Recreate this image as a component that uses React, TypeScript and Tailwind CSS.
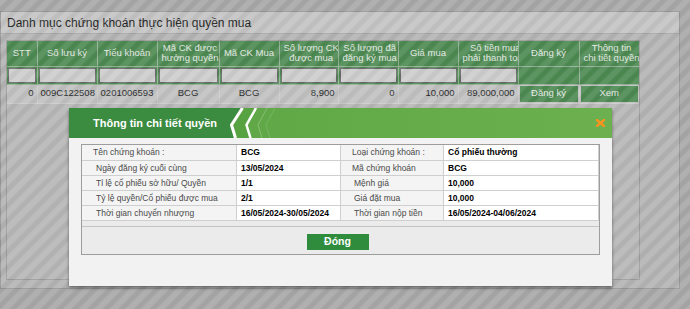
import React from "react";

const cols = [30, 60, 60, 62, 60, 59, 60, 60, 60, 61, 60];

const headers: string[][] = [
  ["STT"],
  ["Số lưu ký"],
  ["Tiểu khoản"],
  ["Mã CK được", "hưởng quyền"],
  ["Mã CK Mua"],
  ["Số lượng CK", "được mua"],
  ["Số lượng đã", "đăng ký mua"],
  ["Giá mua"],
  ["Số tiền mua", "phải thanh toán"],
  ["Đăng ký"],
  ["Thông tin", "chi tiết quyền"],
];

const rowData: { text: string; align: "left" | "center" | "right" }[] = [
  { text: "0", align: "right" },
  { text: "009C122508", align: "center" },
  { text: "0201006593", align: "center" },
  { text: "BCG", align: "center" },
  { text: "BCG", align: "center" },
  { text: "8,900", align: "right" },
  { text: "0", align: "right" },
  { text: "10,000", align: "right" },
  { text: "89,000,000", align: "right" },
];

const details = [
  { l1: "Tên chứng khoán :", v1: "BCG", l2: "Loại chứng khoán :", v2: "Cổ phiếu thường", p1: "pl-[11px]", p2: "pl-[11px]" },
  { l1: "Ngày đăng ký cuối cùng", v1: "13/05/2024", l2: "Mã chứng khoán", v2: "BCG", p1: "pl-[14px]", p2: "pl-[11px]" },
  { l1: "Tỉ lệ cổ phiếu sở hữu/ Quyền", v1: "1/1", l2: "Mệnh giá", v2: "10,000", p1: "pl-[14px]", p2: "pl-[13px]" },
  { l1: "Tỷ lệ quyền/Cổ phiếu được mua", v1: "2/1", l2: "Giá đặt mua", v2: "10,000", p1: "pl-[14px]", p2: "pl-[13px]" },
  { l1: "Thời gian chuyển nhượng", v1: "16/05/2024-30/05/2024", l2: "Thời gian nộp tiền", v2: "16/05/2024-04/06/2024", p1: "pl-[14px]", p2: "pl-[13px]" },
];

const HeaderArt = () => (
  <svg className="absolute inset-0 h-full w-full" viewBox="0 0 543 30" preserveAspectRatio="none">
    <defs>
      <linearGradient id="hdr" x1="0" x2="1" y1="0" y2="0">
        <stop offset="0" stopColor="#5aa443" />
        <stop offset="1" stopColor="#6cb04f" />
      </linearGradient>
    </defs>
    <rect width="543" height="30" fill="url(#hdr)" />
    <polygon points="0,0 172,0 161,17 165,30 0,30" fill="#3b8b40" />
    <polygon points="172,0 186,0 176,17 180,30 165,30 161,17" fill="#57a341" />
    <polyline points="173.5,0 162.5,17 166.5,30" fill="none" stroke="#ffffff" strokeWidth="3" />
    <polyline points="187,0 177.5,17 181.5,30" fill="none" stroke="#ffffff" strokeWidth="2.5" />
    <polyline points="198,0 189,17 193,30" fill="none" stroke="#ffffff" strokeOpacity="0.25" strokeWidth="1" />
    <polyline points="206,0 197,17 201,30" fill="none" stroke="#ffffff" strokeOpacity="0.15" strokeWidth="1" />
  </svg>
);

export default function App() {
  return (
    <div className="relative h-[309px] w-[690px] overflow-hidden bg-[#a8a8a8] pt-[11px] font-['Liberation_Sans',Arial,sans-serif]">
      <section className="h-[278px] w-[680px] border border-[#969696] bg-[#b4b4b4]">
        <div className="flex h-[22px] items-center border-b border-[#a6a6a6] bg-[#c4c4c4] pl-[6px] text-[12px] text-[#1f1f1f]">
          Danh mục chứng khoán thực hiện quyền mua
        </div>
        <div className="ml-[5px] mt-[6px] h-[240px] w-[634px] border border-[#9b9b9b] bg-[#b7b7b7]">
          <table className="w-[632px] table-fixed border-collapse text-[9.5px]">
            <colgroup>
              {cols.map((w, i) => (
                <col key={i} style={{ width: w }} />
              ))}
            </colgroup>
            <thead>
              <tr className="h-[25px]">
                {headers.map((lines, i) => (
                  <th
                    key={i}
                    className="overflow-hidden border-r border-b border-[#93b096] bg-[#4d8a52] px-[4px] py-0 text-center font-normal leading-[10px] text-[#e4ebe4] last:border-r-0"
                  >
                    <div className="inline-block whitespace-nowrap text-center">
                      {lines.map((l, j) => (
                        <div key={j}>{l}</div>
                      ))}
                    </div>
                  </th>
                ))}
              </tr>
              <tr className="h-[18px]">
                {headers.map((_, i) => (
                  <td
                    key={i}
                    className="border-r border-b border-[#93b096] bg-[#4d8a52] px-[1px] py-0 last:border-r-0"
                  >
                    {i < 9 && (
                      <input
                        readOnly
                        className="block h-[15px] w-full border border-[#6a6a6a] bg-[#cdcdcd] outline-none"
                      />
                    )}
                  </td>
                ))}
              </tr>
            </thead>
            <tbody>
              <tr className="h-[18px] text-[#2a2a2a]">
                {rowData.map((c, i) => (
                  <td
                    key={i}
                    className={
                      "overflow-hidden whitespace-nowrap border-r border-b border-[#cbcbcb] bg-[#c1c1c1] px-[3px] py-0 " +
                      (c.align === "right" ? "text-right" : "text-center")
                    }
                  >
                    {c.text}
                  </td>
                ))}
                <td className="border-r border-b border-[#cbcbcb] bg-[#c1c1c1] px-[1px] py-[1px]">
                  <button className="block h-[16px] w-full bg-[#4d8a52] text-[9.5px] text-[#e4ebe4]">Đăng ký</button>
                </td>
                <td className="border-b border-[#cbcbcb] bg-[#c1c1c1] px-[1px] py-[1px]">
                  <button className="block h-[16px] w-full bg-[#4d8a52] text-[9.5px] text-[#e4ebe4]">Xem</button>
                </td>
              </tr>
            </tbody>
          </table>
        </div>
      </section>

      {/* striped modal backdrop */}
      <div className="absolute inset-0 bg-[image:repeating-linear-gradient(135deg,rgba(255,255,255,0.09)_0px,rgba(255,255,255,0.09)_4px,rgba(0,0,0,0.03)_6px,rgba(0,0,0,0.03)_9px,rgba(255,255,255,0.09)_11px)]" />

      <div className="absolute left-[69px] top-[108px] h-[178px] w-[543px] bg-[#f2f2f2] shadow-[0_2px_3px_rgba(0,0,0,0.45)]">
        <div className="relative flex h-[30px] items-center">
          <HeaderArt />
          <span className="relative pl-[24px] text-[11px] font-bold text-white">Thông tin chi tiết quyền</span>
          <svg className="absolute right-[7px] top-[11px] h-[8px] w-[9px]" viewBox="0 0 9 8">
            <path d="M1 1 L8 7 M8 1 L1 7" stroke="#f7941d" strokeWidth="2.4" strokeLinecap="square" />
          </svg>
        </div>
        <div className="px-[12px] pt-[6px]">
          <div className="h-[111px] border border-[#9d9d9d] bg-[#ebebeb]">
            {details.map((r, i) => (
              <div
                key={i}
                className={
                  "grid grid-cols-[155px_104px_103px_155px] border-b border-[#cfcfcf] text-[8.5px] " +
                  (i === 0 ? "h-[16px]" : "h-[15px]")
                }
              >
                <div className={"flex items-center border-r border-[#cfcfcf] bg-[#f4f4f4] text-[#4a4a4a] " + r.p1}>{r.l1}</div>
                <div className="flex items-center border-r border-[#cfcfcf] bg-white pl-[4px] font-bold text-black">{r.v1}</div>
                <div className={"flex items-center border-r border-[#cfcfcf] bg-[#f4f4f4] text-[#4a4a4a] " + r.p2}>{r.l2}</div>
                <div className="flex items-center border-r border-[#cfcfcf] bg-white pl-[4px] font-bold text-black">{r.v2}</div>
              </div>
            ))}
            <div className="mt-[5px] flex justify-center border-t border-[#c4c4c4] pr-[6px] pt-[7px]">
              <button className="h-[16px] w-[62px] bg-[#2e8c3c] text-[10.5px] font-bold text-white">Đóng</button>
            </div>
          </div>
        </div>
      </div>
    </div>
  );
}
